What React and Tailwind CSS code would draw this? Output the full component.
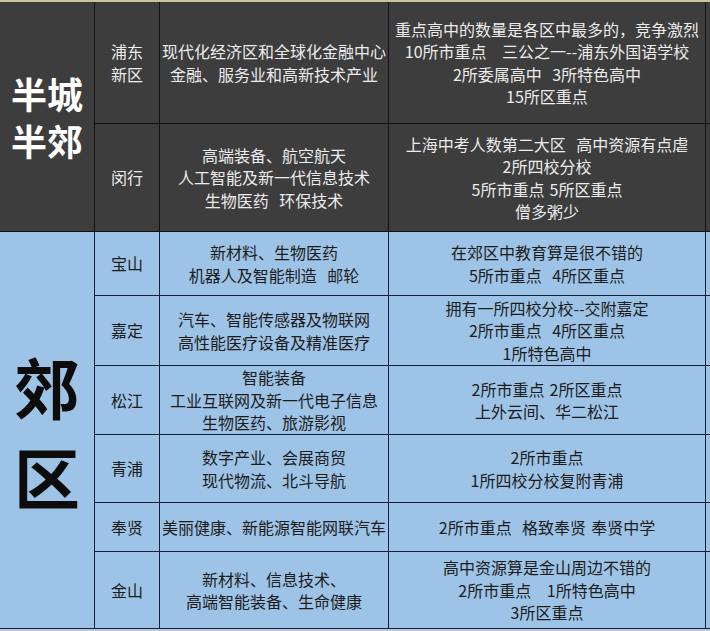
const FONT = { fontFamily: "'Noto Sans CJK SC', 'Noto Sans', sans-serif" }

const CITY = [
  {
    name: ['浦东', '新区'],
    h: 'h-[122px]',
    industry: ['现代化经济区和全球化金融中心', '金融、服务业和高新技术产业'],
    schools: ['重点高中的数量是各区中最多的，竞争激烈', '10所市重点   三公之一--浦东外国语学校', '2所委属高中  3所特色高中', '15所区重点'],
  },
  {
    name: ['闵行'],
    h: 'h-[108px]',
    industry: ['高端装备、航空航天', '人工智能及新一代信息技术', '生物医药  环保技术'],
    schools: ['上海中考人数第二大区  高中资源有点虐', '2所四校分校', '5所市重点 5所区重点', '僧多粥少'],
  },
]

const SUBURB = [
  { name: ['宝山'], h: 'h-[64px]', industry: ['新材料、生物医药', '机器人及智能制造  邮轮'], schools: ['在郊区中教育算是很不错的', '5所市重点  4所区重点'] },
  { name: ['嘉定'], h: 'h-[70px]', industry: ['汽车、智能传感器及物联网', '高性能医疗设备及精准医疗'], schools: ['拥有一所四校分校--交附嘉定', '2所市重点  4所区重点', '1所特色高中'] },
  { name: ['松江'], h: 'h-[69px]', industry: ['智能装备', '工业互联网及新一代电子信息', '生物医药、旅游影视'], schools: ['2所市重点 2所区重点', '上外云间、华二松江'] },
  { name: ['青浦'], h: 'h-[68px]', industry: ['数字产业、会展商贸', '现代物流、北斗导航'], schools: ['2所市重点', '1所四校分校复附青浦'] },
  { name: ['奉贤'], h: 'h-[49px]', industry: ['美丽健康、新能源智能网联汽车'], schools: ['2所市重点  格致奉贤 奉贤中学'] },
  { name: ['金山'], h: 'h-[77px]', industry: ['新材料、信息技术、', '高端智能装备、生命健康'], schools: ['高中资源算是金山周边不错的', '2所市重点   1所特色高中', '3所区重点'] },
]

function Lines({ items }) {
  return (
    <div className="flex flex-col items-center">
      {items.map((t, i) => (
        <div key={i} className="whitespace-pre leading-[22.5px] [word-spacing:1.6px]">{t}</div>
      ))}
    </div>
  )
}

function Row({ row, line }) {
  return (
    <div className={`flex ${row.h} border-b ${line}`}>
      <div className={`w-[65px] shrink-0 border-r ${line} flex items-center justify-center`}>
        <Lines items={row.name} />
      </div>
      <div className={`w-[229px] shrink-0 border-r ${line} flex items-center justify-center`}>
        <Lines items={row.industry} />
      </div>
      <div className={`w-[317px] shrink-0 border-r ${line} flex items-center justify-center`}>
        <Lines items={row.schools} />
      </div>
      <div className="flex-1" />
    </div>
  )
}

export default function App() {
  return (
    <div className="w-[710px] h-[631px] overflow-hidden bg-[#9dc3e6] text-[16px]" style={FONT}>
      <div className="h-[2px] bg-[#c9c4a2]" />

      {/* 半城半郊 */}
      <div className="flex bg-[#3d3d3d] text-[#ececec]">
        <div className="w-[95px] shrink-0 border-r border-b border-[#121212] flex flex-col items-center justify-center font-bold text-[36px] leading-[47px] text-white">
          <div>半城</div>
          <div>半郊</div>
        </div>
        <div className="flex-1 flex flex-col">
          {CITY.map(r => <Row key={r.name.join('')} row={r} line="border-[#121212]" />)}
        </div>
      </div>

      {/* 郊区 */}
      <div className="flex bg-[#9dc3e6] text-[#1c1c1c]">
        <div className="w-[95px] shrink-0 border-r border-b border-[#14203a] flex flex-col items-center justify-center font-bold text-[66px] leading-[90px] text-[#0c0c0c]">
          <div>郊</div>
          <div>区</div>
        </div>
        <div className="flex-1 flex flex-col">
          {SUBURB.map(r => <Row key={r.name.join('')} row={r} line="border-[#14203a]" />)}
        </div>
      </div>

      <div className="h-[2px] bg-[#b9c7d6]" />
    </div>
  )
}
